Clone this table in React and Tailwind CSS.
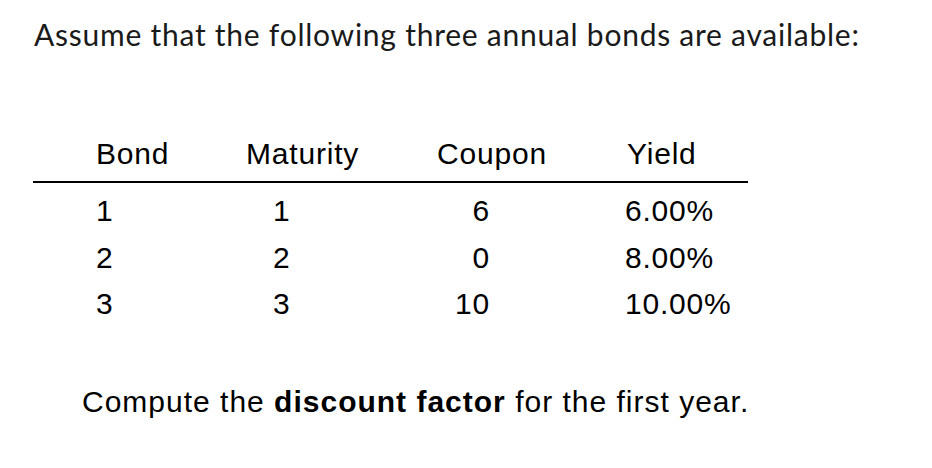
import React from "react";

const rows = [
  { bond: "1", maturity: "1", coupon: "6", yld: "6.00%" },
  { bond: "2", maturity: "2", coupon: "0", yld: "8.00%" },
  { bond: "3", maturity: "3", coupon: "10", yld: "10.00%" },
];

export default function App() {
  return (
    <div className="w-[932px] h-[468px] bg-white text-black overflow-hidden">
      {/* Intro */}
      <p className="pl-[34px] pt-[17px] text-[30px] leading-[34px] tracking-[0.75px] font-['Lato',sans-serif] text-[#1a1a1a]">
        Assume that the following three annual bonds are available:
      </p>

      {/* Table */}
      <div className="ml-[33px] mt-[80px] w-[715px] font-['Liberation_Sans',Arial,sans-serif] text-[30px] tracking-[0.8px]">
        <div className="grid grid-cols-[200px_170px_220px_125px] h-[50px] leading-[46px]">
          <div className="pl-[63px]">Bond</div>
          <div className="pl-[13px]">Maturity</div>
          <div className="pl-[34px]">Coupon</div>
          <div className="pl-[4px]">Yield</div>
        </div>
        <div className="h-[2px] bg-black" />
        <div className="pt-[5px]">
          {rows.map((r) => (
            <div
              key={r.bond}
              className="grid grid-cols-[200px_170px_220px_125px] leading-[46.5px]"
            >
              <div className="pl-[63px]">{r.bond}</div>
              <div className="pl-[40px]">{r.maturity}</div>
              <div className="pr-[133px] text-right">{r.coupon}</div>
              <div className="pl-[2px]">{r.yld}</div>
            </div>
          ))}
        </div>
      </div>

      {/* Question */}
      <p className="pl-[82px] mt-[58px] text-[30px] leading-[32px] tracking-[1px] font-['Liberation_Sans',Arial,sans-serif]">
        Compute the <span className="font-bold">discount factor</span> for the first year.
      </p>
    </div>
  );
}
